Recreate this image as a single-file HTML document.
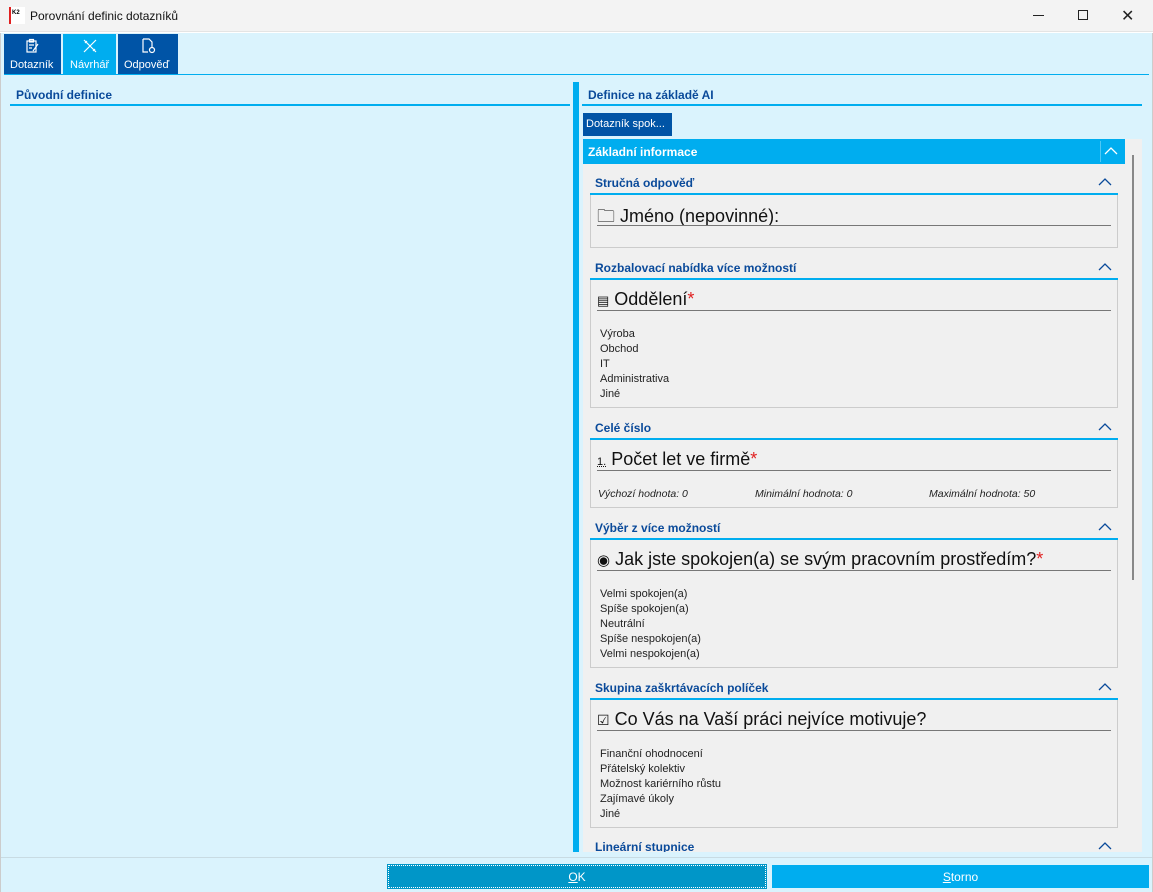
<!DOCTYPE html>
<html><head><meta charset="utf-8"><style>
*{margin:0;padding:0;box-sizing:border-box}
body{width:1153px;height:892px;overflow:hidden;font-family:"Liberation Sans",sans-serif;background:#fff;position:relative}
.a{position:absolute}
.hd{position:absolute;font-size:12px;font-weight:bold;color:#0a4a9a}
.ul{position:absolute;height:2px;background:#00adef}
.box{position:absolute;left:590px;width:528px;border:1px solid #ccc;border-top:none;background:#f0f0f0}
.fl{position:absolute;left:6px;font-size:18px;color:#111}
.fline{position:absolute;left:6px;width:514px;height:1px;background:#777}
.opt{position:absolute;left:9px;font-size:11px;color:#222;line-height:15px}
.car{position:absolute;left:1098px;width:14px;height:10px}
.star{color:#e02020}
</style></head><body>
<!-- title bar -->
<div class="a" style="left:0;top:0;width:1153px;height:32px;background:#f3f3f3;border-bottom:1px solid #e4e4e4"></div>
<div class="a" style="left:9px;top:7px;width:16px;height:17px;background:#fff;border-left:2px solid #e02020"></div>
<div class="a" style="left:12px;top:10px;font-size:6px;font-weight:bold">K2</div>
<div class="a" style="left:30px;top:9px;font-size:12px;color:#111">Porovnání definic dotazníků</div>
<div class="a" style="left:1033px;top:15px;width:11px;height:1px;background:#222"></div>
<div class="a" style="left:1078px;top:10px;width:10px;height:10px;border:1px solid #222"></div>
<div class="a" style="left:1121px;top:6px;font-size:16px;color:#222">✕</div>
<!-- body -->
<div class="a" style="left:0;top:33px;width:1153px;height:859px;background:#daf3fd;border-left:1px solid #ccc;border-right:1px solid #ccc"></div>
<div class="a" style="left:4px;top:34px;width:57px;height:40px;background:#0054a6"></div>
<div class="a" style="left:63px;top:34px;width:53px;height:40px;background:#00adef"></div>
<div class="a" style="left:118px;top:34px;width:60px;height:40px;background:#0054a6"></div>
<svg class="a" style="left:25px;top:38px" width="16" height="16" fill="none" stroke="#fff" stroke-width="1.2"><rect x="2" y="3" width="9" height="11"/><rect x="4.5" y="1.5" width="4" height="2.5"/><path d="M4 7h5M4 10h3M13 6l-5 7"/></svg>
<svg class="a" style="left:82px;top:38px" width="16" height="16" fill="none" stroke="#fff" stroke-width="1.2"><path d="M2 2l12 12M14 2L2 14M3 5l2-2M11 13l2-2"/></svg>
<svg class="a" style="left:140px;top:38px" width="16" height="16" fill="none" stroke="#fff" stroke-width="1.2"><path d="M3 1h6l3 3v5M3 1v13h5"/><circle cx="12" cy="12" r="2.5"/></svg>
<div class="a" style="left:10px;top:59px;font-size:11px;color:#fff">Dotazník</div>
<div class="a" style="left:70px;top:59px;font-size:11px;color:#fff">Návrhář</div>
<div class="a" style="left:124px;top:59px;font-size:11px;color:#fff">Odpověď</div>
<div class="a" style="left:4px;top:74px;width:1145px;height:1px;background:#00adef"></div>
<!-- left -->
<div class="hd" style="left:16px;top:88px">Původní definice</div>
<div class="ul" style="left:10px;top:104px;width:560px"></div>
<!-- splitter -->
<div class="a" style="left:573px;top:82px;width:6px;height:770px;background:#00adef"></div>
<!-- right -->
<div class="hd" style="left:588px;top:88px">Definice na základě AI</div>
<div class="ul" style="left:582px;top:104px;width:560px"></div>
<div class="a" style="left:583px;top:113px;width:89px;height:23px;background:#0054a6;color:#fff;font-size:11px;padding:5px 0 0 3px">Dotazník spok...</div>
<div class="a" style="left:583px;top:139px;width:559px;height:713px;background:#f0f0f0"></div>
<div class="a" style="left:1132px;top:155px;width:2px;height:425px;background:#888"></div>
<div class="a" style="left:583px;top:139px;width:542px;height:25px;background:#00adef"></div>
<div class="a" style="left:1100px;top:141px;width:1px;height:21px;background:#4fc8f5"></div>
<div class="a" style="left:588px;top:145px;font-size:12px;font-weight:bold;color:#fff">Základní informace</div>
<svg class="a" style="left:1104px;top:146px" width="14" height="10" fill="none" stroke="#fff" stroke-width="1.3"><path d="M1 8l6-6 6 6"/></svg>

<!-- sections -->
<div class="hd" style="left:595px;top:176px">Stručná odpověď</div>
<svg class="car" style="top:177px" fill="none" stroke="#0a4a9a" stroke-width="1.3"><path d="M1 8l6-6 6 6"/></svg>
<div class="ul" style="left:590px;top:193px;width:528px"></div>
<div class="box" style="top:195px;height:53px"><div class="fl" style="top:9px">🗀 Jméno (nepovinné):</div><div class="fline" style="top:30px"></div></div>

<div class="hd" style="left:595px;top:261px">Rozbalovací nabídka více možností</div>
<svg class="car" style="top:262px" fill="none" stroke="#0a4a9a" stroke-width="1.3"><path d="M1 8l6-6 6 6"/></svg>
<div class="ul" style="left:590px;top:278px;width:528px"></div>
<div class="box" style="top:280px;height:128px"><div class="fl" style="top:9px"><span style="font-size:13px">▤</span> Oddělení<span class="star">*</span></div><div class="fline" style="top:30px"></div>
<div class="opt" style="top:47px">Výroba<br>Obchod<br>IT<br>Administrativa<br>Jiné</div></div>

<div class="hd" style="left:595px;top:421px">Celé číslo</div>
<svg class="car" style="top:422px" fill="none" stroke="#0a4a9a" stroke-width="1.3"><path d="M1 8l6-6 6 6"/></svg>
<div class="ul" style="left:590px;top:438px;width:528px"></div>
<div class="box" style="top:440px;height:68px"><div class="fl" style="top:9px"><span style="font-size:11px;text-decoration:underline dotted">1.</span> Počet let ve firmě<span class="star">*</span></div><div class="fline" style="top:30px"></div>
<div class="opt" style="top:47px;left:7px;font-style:italic;font-size:10.5px">Výchozí hodnota: 0</div>
<div class="opt" style="top:47px;left:164px;font-style:italic;font-size:10.5px">Minimální hodnota: 0</div>
<div class="opt" style="top:47px;left:338px;font-style:italic;font-size:10.5px">Maximální hodnota: 50</div></div>

<div class="hd" style="left:595px;top:521px">Výběr z více možností</div>
<svg class="car" style="top:522px" fill="none" stroke="#0a4a9a" stroke-width="1.3"><path d="M1 8l6-6 6 6"/></svg>
<div class="ul" style="left:590px;top:538px;width:528px"></div>
<div class="box" style="top:540px;height:128px"><div class="fl" style="top:9px"><span style="font-size:15px">◉</span> Jak jste spokojen(a) se svým pracovním prostředím?<span class="star">*</span></div><div class="fline" style="top:30px"></div>
<div class="opt" style="top:47px">Velmi spokojen(a)<br>Spíše spokojen(a)<br>Neutrální<br>Spíše nespokojen(a)<br>Velmi nespokojen(a)</div></div>

<div class="hd" style="left:595px;top:681px">Skupina zaškrtávacích políček</div>
<svg class="car" style="top:682px" fill="none" stroke="#0a4a9a" stroke-width="1.3"><path d="M1 8l6-6 6 6"/></svg>
<div class="ul" style="left:590px;top:698px;width:528px"></div>
<div class="box" style="top:700px;height:128px"><div class="fl" style="top:9px"><span style="font-size:14px">☑</span> Co Vás na Vaší práci nejvíce motivuje?</div><div class="fline" style="top:30px"></div>
<div class="opt" style="top:47px">Finanční ohodnocení<br>Přátelský kolektiv<br>Možnost kariérního růstu<br>Zajímavé úkoly<br>Jiné</div></div>

<div class="a" style="left:583px;top:838px;width:559px;height:14px;overflow:hidden">
<div class="hd" style="left:12px;top:2px">Lineární stupnice</div>
<svg class="car" style="left:515px;top:3px" fill="none" stroke="#0a4a9a" stroke-width="1.3"><path d="M1 8l6-6 6 6"/></svg></div>

<!-- bottom -->
<div class="a" style="left:1px;top:857px;width:1151px;height:1px;background:#c8dbe3"></div>
<div class="a" style="left:388px;top:865px;width:378px;height:23px;background:#0096c8;border:1px dotted #fff;outline:1px solid #0096c8;color:#fff;font-size:12px;text-align:center;padding-top:4px"><u>O</u>K</div>
<div class="a" style="left:772px;top:865px;width:377px;height:23px;background:#00adef;color:#fff;font-size:12px;text-align:center;padding-top:5px"><u>S</u>torno</div>
</body></html>
